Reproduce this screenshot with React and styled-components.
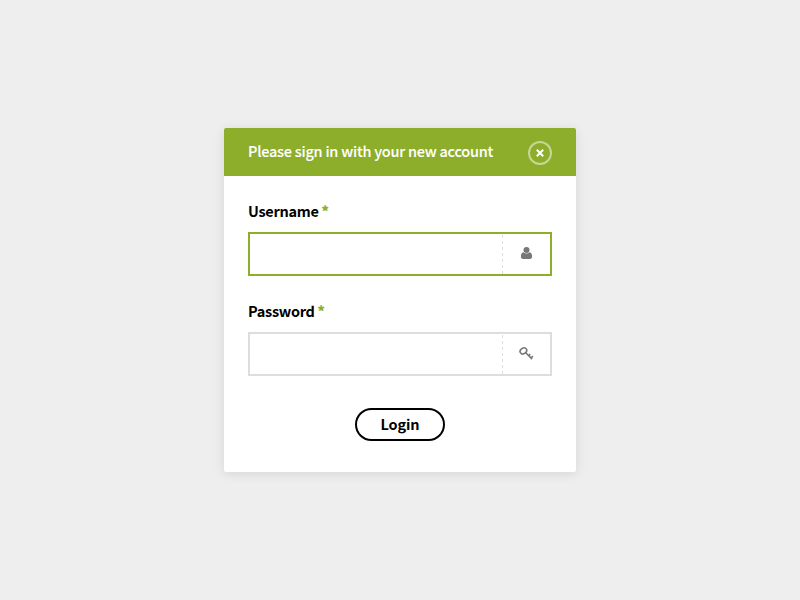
import React from "react";
import styled, { createGlobalStyle } from "styled-components";

const GlobalStyle = createGlobalStyle`
  * { box-sizing: border-box; }
  body {
    margin: 0;
    background: #eee;
    font-family: "Noto Sans CJK SC", "Noto Sans", sans-serif;
    font-size: 14.5px;
    color: #000;
  }
`;

const Page = styled.main`
  min-height: 100vh;
  display: grid;
  place-items: center;
`;

const Dialog = styled.section`
  width: 352px;
  height: 344px;
  background: #fff;
  border-radius: 2px;
  overflow: hidden;
  box-shadow: 0 2px 12px rgba(0, 0, 0, 0.1);
`;

const Header = styled.header`
  height: 48px;
  padding: 2px 24px 0;
  display: flex;
  align-items: center;
  justify-content: space-between;
  background: #8dae2a;
`;

const Title = styled.h1`
  margin: 0 0 5px;
  font-size: 14.5px;
  line-height: 24px;
  font-weight: 500;
  letter-spacing: -0.24px;
  -webkit-text-stroke: 0.1px #fff;
  color: #fff;
  white-space: nowrap;
`;

const CloseButton = styled.button`
  width: 24px;
  height: 24px;
  padding: 0;
  display: grid;
  place-items: center;
  border: 2px solid rgba(255, 255, 255, 0.5);
  border-radius: 50%;
  background: none;
`;

const Form = styled.form`
  padding: 24px;
  display: flex;
  flex-direction: column;
`;

const Field = styled.div`
  height: 76px;
  margin-bottom: 24px;
`;

const Label = styled.label`
  display: block;
  height: 32px;
  line-height: 21px;
  font-weight: 700;
  letter-spacing: -0.3px;
`;

const Required = styled.span`
  color: #8dae2a;
  -webkit-text-stroke: 0.3px #8dae2a;
`;

const InputBox = styled.div`
  display: flex;
  height: 44px;
  border: 2px solid ${(p) => (p.$active ? "#8dae2a" : "#ddd")};
`;

const Input = styled.input`
  flex: 1;
  min-width: 0;
  border: 0;
  padding: 0 10px;
  outline: none;
  background: none;
  font: inherit;
`;

const IconCell = styled.span`
  width: 48px;
  display: grid;
  place-items: center;
  background: repeating-linear-gradient(transparent 0 1px, #ddd 1px 4px, transparent 4px 6px) left top / 1px 100% no-repeat;
`;

const LoginButton = styled.button`
  align-self: center;
  width: 90px;
  height: 33px;
  margin-top: 8px;
  padding: 0 0 1px;
  border: 2px solid #000;
  border-radius: 17px;
  background: #fff;
  color: #000;
  font: 700 14.5px/24px "Noto Sans CJK SC", "Noto Sans", sans-serif;
  letter-spacing: -0.15px;
`;

const Glyph = styled.svg`
  display: block;
`;

const UserIcon = () => (
  <Glyph width="14" height="14" viewBox="0 0 14 14" fill="#777">
    <circle cx="7.500" cy="3" r="3" />
    <path d="M4.500 5.200C2.500 5.500 1.900 7.400 1.900 9.600c0 1.500.8 2.300 2 2.300h7.200c1.200 0 2-.8 2-2.300 0-2.200-.6-4.100-2.600-4.400C8.800 6.900 6.200 6.900 4.500 5.200Z" />
  </Glyph>
);

const KeyIcon = () => (
  <Glyph width="16" height="16" viewBox="0 0 16 16" fill="none" stroke="#777" strokeWidth="1.600">
    <ellipse cx="5.400" cy="4.900" rx="3.500" ry="2.700" transform="rotate(-35 5.400 4.900)" />
    <path d="M7.500 6.500L14.100 13.100M10.600 9.800L12.300 8.100M12.900 12.100L14.900 10.100" />
  </Glyph>
);

export default function App() {
  return (
    <Page>
      <GlobalStyle />
      <Dialog>
        <Header>
          <Title>Please sign in with your new account</Title>
          <CloseButton aria-label="Close">
            <Glyph width="8" height="8" viewBox="0 0 8 8" stroke="#fff" strokeWidth="2">
              <path d="M.8.8l6.400 6.400M7.200.8L.8 7.200" />
            </Glyph>
          </CloseButton>
        </Header>
        <Form onSubmit={(e) => e.preventDefault()}>
          <Field>
            <Label htmlFor="username">Username <Required>*</Required></Label>
            <InputBox $active>
              <Input id="username" />
              <IconCell><UserIcon /></IconCell>
            </InputBox>
          </Field>
          <Field>
            <Label htmlFor="password">Password <Required>*</Required></Label>
            <InputBox>
              <Input id="password" type="password" />
              <IconCell><KeyIcon /></IconCell>
            </InputBox>
          </Field>
          <LoginButton type="submit">Login</LoginButton>
        </Form>
      </Dialog>
    </Page>
  );
}
